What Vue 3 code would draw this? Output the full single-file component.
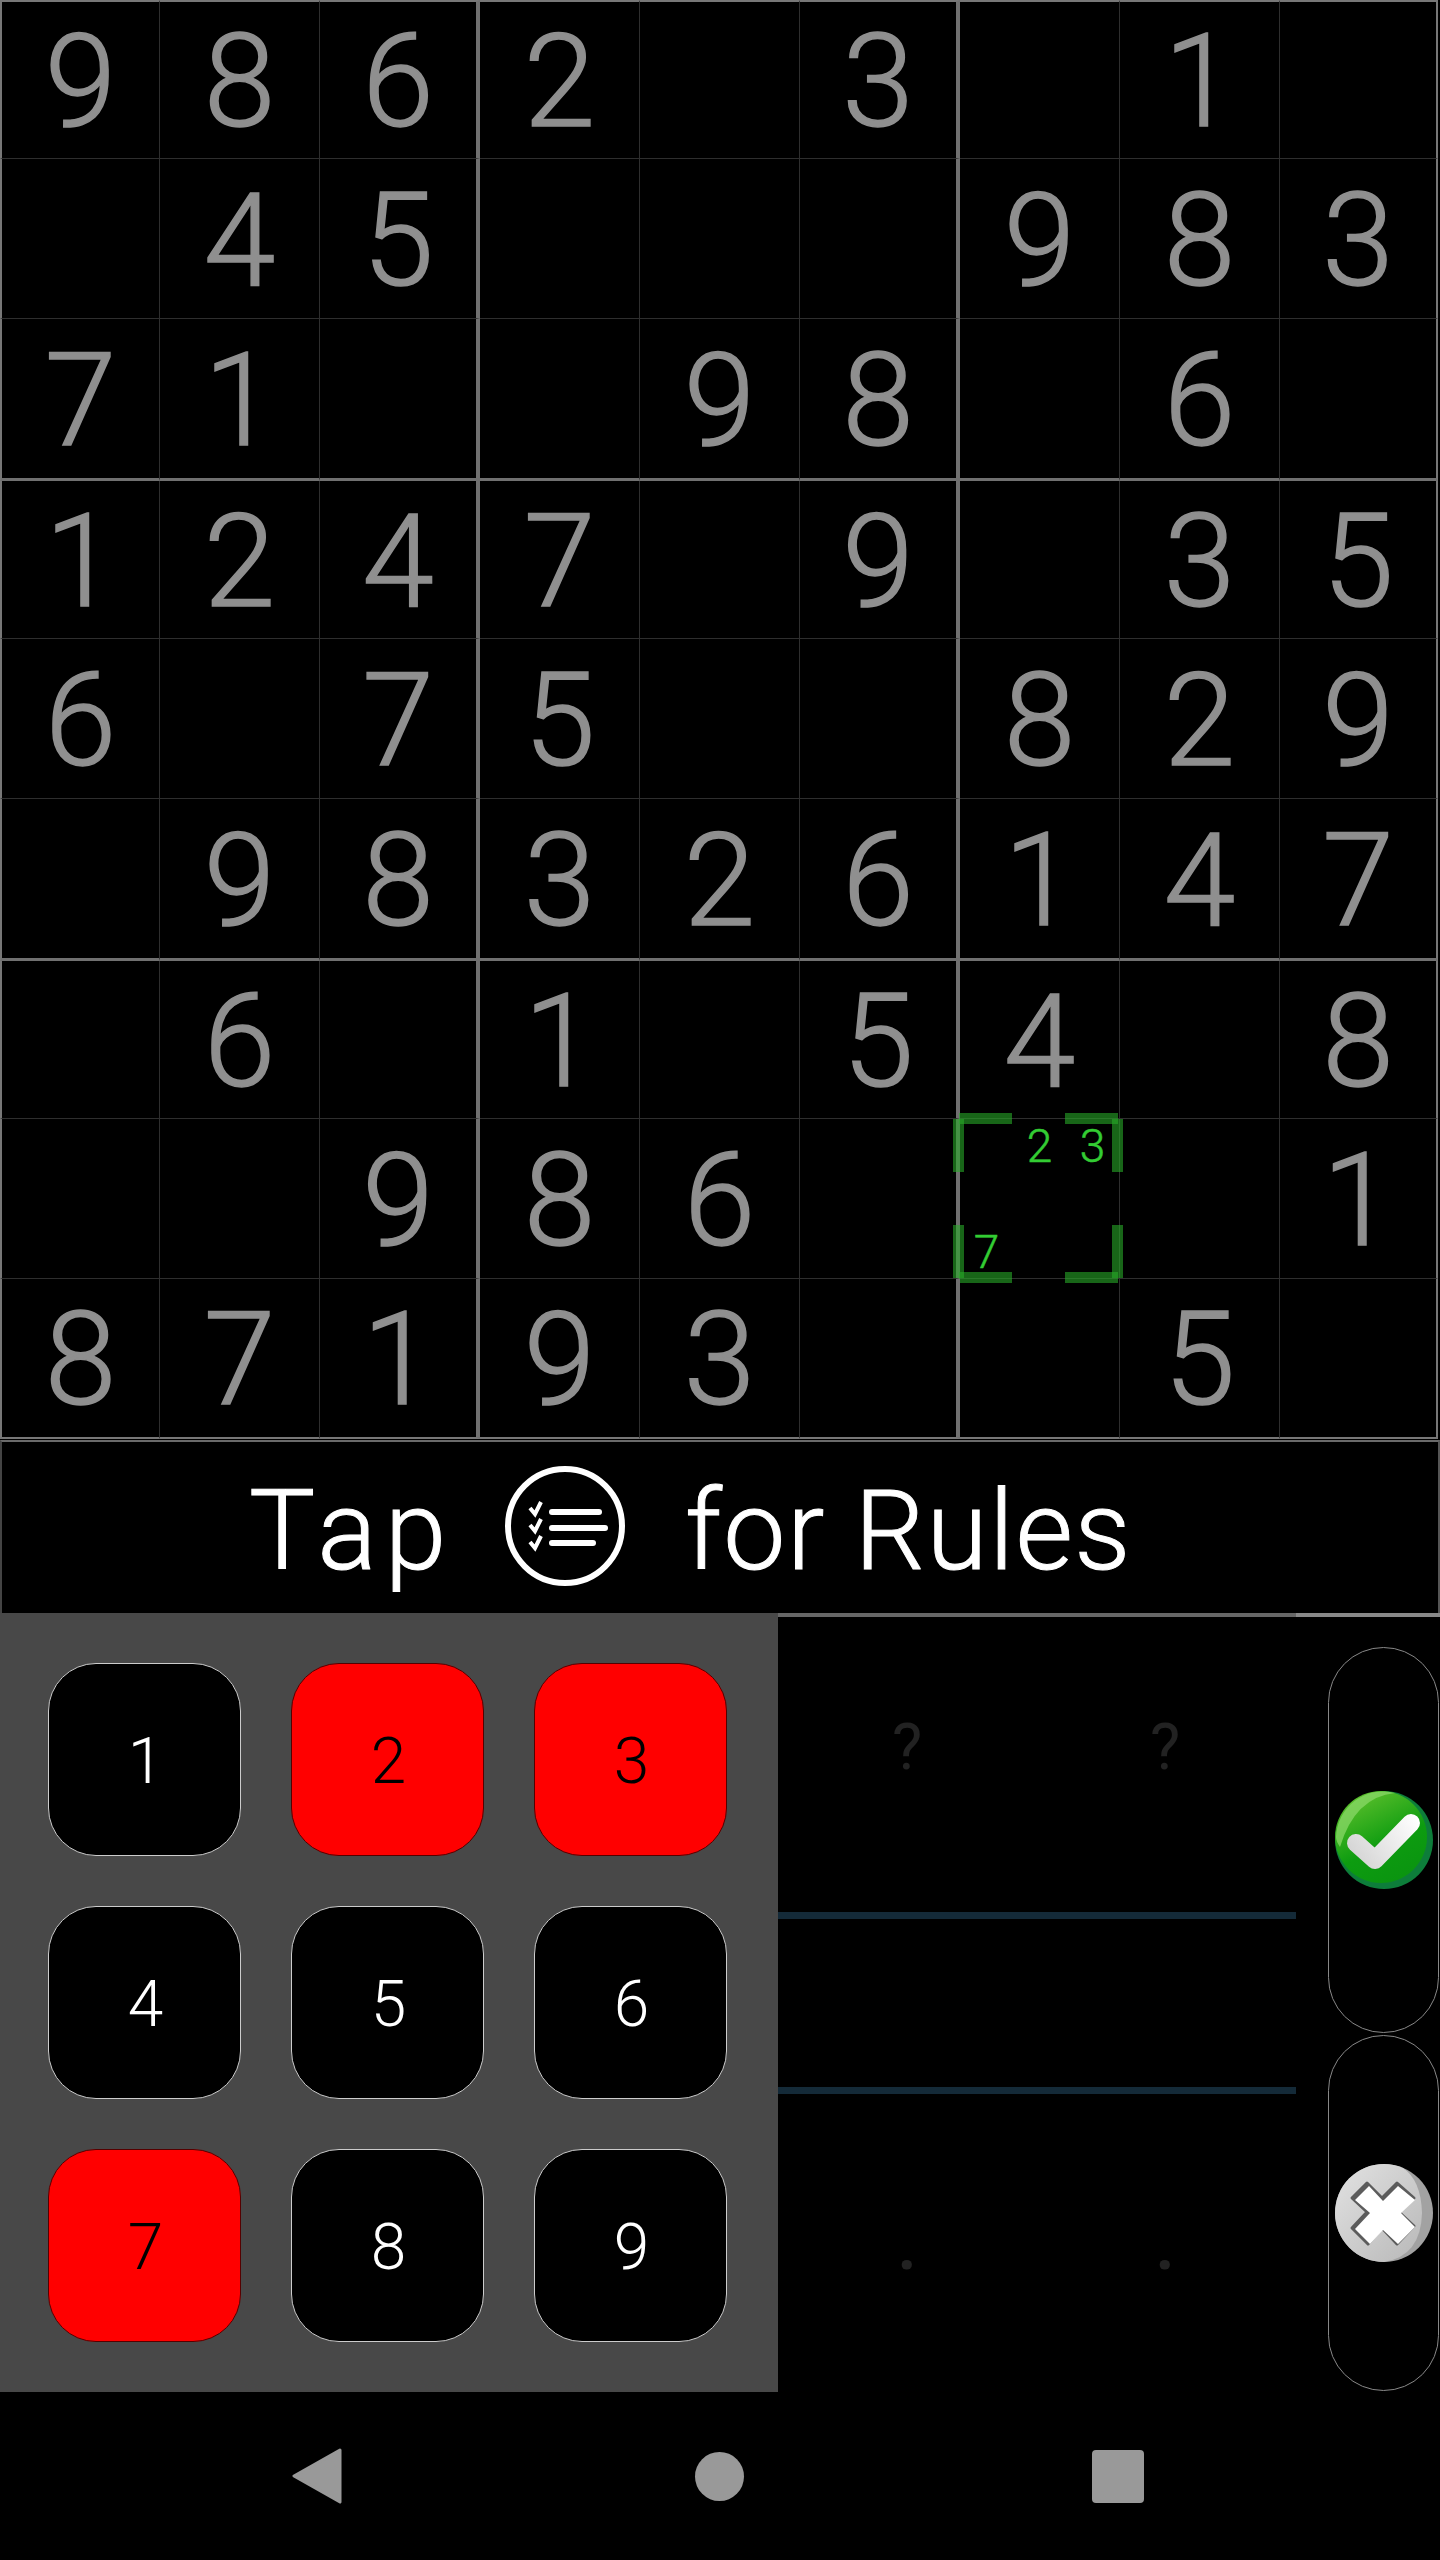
<template>
  <div class="screen">
    <div class="board">
      <div v-for="(cell, i) in cells" :key="i" class="cell" :class="cellClass(i)">
        <template v-if="i === selected">
          <div class="notes">
            <span v-for="n in 9" :key="n">{{ notes.includes(n) ? n : '' }}</span>
          </div>
          <i class="tick top-l-h"></i><i class="tick top-l-v"></i>
          <i class="tick top-r-h"></i><i class="tick top-r-v"></i>
          <i class="tick bot-l-h"></i><i class="tick bot-l-v"></i>
          <i class="tick bot-r-h"></i><i class="tick bot-r-v"></i>
        </template>
        <span v-else-if="cell !== '.'" class="digit">{{ cell }}</span>
      </div>
    </div>

    <div class="banner">
      <span class="tap">Tap</span>
      <svg class="rules" width="120" height="120" viewBox="0 0 120 120">
        <circle cx="60" cy="60" r="57" fill="none" stroke="#fff" stroke-width="6" />
        <g fill="none" stroke="#fff" stroke-width="4">
          <path d="M25 42l5 6 6-12" />
          <path d="M25 59l5 6 6-12" />
          <path d="M25 76l5 6 6-12" />
        </g>
        <g stroke="#fff" stroke-width="6" stroke-linecap="round">
          <path d="M47 46h47" />
          <path d="M47 62h53" />
          <path d="M47 77h41" />
        </g>
      </svg>
      <span class="for">for Rules</span>
    </div>

    <div class="lower">
      <div class="keypad">
        <button v-for="n in 9" :key="n" class="key" :class="{ bad: notes.includes(n) }">{{ n }}</button>
      </div>

      <div class="slots">
        <div class="slot-row first"><span>?</span><span>?</span></div>
        <div class="slot-row middle"></div>
        <div class="slot-row last"><span>.</span><span>.</span></div>
      </div>

      <div class="actions">
        <div class="pill ok">
          <svg width="98" height="98" viewBox="0 0 98 98">
            <defs>
              <linearGradient id="okFill" x1="0.2" y1="0" x2="0.7" y2="1">
                <stop offset="0" stop-color="#62c22e" />
                <stop offset="0.6" stop-color="#0d9c10" />
                <stop offset="1" stop-color="#0a9410" />
              </linearGradient>
              <linearGradient id="tickFill" gradientUnits="userSpaceOnUse" x1="20" y1="70" x2="80" y2="25">
                <stop offset="0" stop-color="#d4d4d4" />
                <stop offset="1" stop-color="#ffffff" />
              </linearGradient>
            </defs>
            <circle cx="49" cy="49" r="49" fill="#0d7d3a" />
            <circle cx="46" cy="46" r="46" fill="url(#okFill)" />
            <path d="M1 46A47 47 0 0 1 60 2Q20 6 5 56 1 50 1 46Z" fill="#8ad868" opacity="0.75" />
            <path d="M21 52L40 69 76 32" fill="none" stroke="url(#tickFill)" stroke-width="18" stroke-linecap="round" stroke-linejoin="round" />
          </svg>
        </div>
        <div class="pill cancel">
          <svg width="98" height="98" viewBox="0 0 98 98">
            <defs>
              <linearGradient id="noFill" x1="0" y1="0" x2="1" y2="1">
                <stop offset="0" stop-color="#e2e2e2" />
                <stop offset="1" stop-color="#b8b8b8" />
              </linearGradient>
            </defs>
            <circle cx="49" cy="49" r="49" fill="#a2a2a2" />
            <path d="M49 0A49 49 0 0 0 49 98Q86 92 87 49 86 16 68 4 59 0 49 0Z" fill="url(#noFill)" />
            <path d="M33 20L48 35 63 20 80 35 65 49 80 63 63 81 48 65 34 81 18 65 33 49 18 35Z" fill="#5c5c5c" stroke="#5c5c5c" stroke-width="3" stroke-linejoin="round" transform="translate(-1 -1)" />
            <path d="M34 22L48 37 63 22 80 36 66 49 80 63 63 80 48 66 35 80 20 65 35 49 20 36Z" fill="#fff" />
          </svg>
        </div>
      </div>
    </div>

    <div class="nav">
      <svg width="50" height="56" viewBox="0 0 50 56"><path d="M48 2L2 28l46 26z" fill="#999" stroke="#999" stroke-width="3" stroke-linejoin="round" /></svg>
      <div class="home"></div>
      <div class="recent"></div>
    </div>
  </div>
</template>

<script setup>
const rows = [
  '9862.3.1.',
  '.45...983',
  '71..98.6.',
  '1247.9.35',
  '6.75..829',
  '.98326147',
  '.6.1.54.8',
  '..986...1',
  '87193..5.',
]
const cells = rows.join('').split('')
const selected = 7 * 9 + 6
const notes = [2, 3, 7]

function cellClass(i) {
  const col = i % 9
  const row = Math.floor(i / 9)
  return {
    'col-first': col === 0,
    'col-end': col % 3 === 2 && col !== 8,
    'col-last': col === 8,
    'row-first': row === 0,
    'row-end': row % 3 === 2 && row !== 8,
    'row-last': row === 8,
  }
}
</script>

<style>
html, body {
  background: #000;
}
</style>

<style scoped>
.screen {
  width: 1440px;
  height: 2560px;
  background: #000;
  display: flex;
  flex-direction: column;
  font-family: Roboto, "Liberation Sans", sans-serif;
  overflow: hidden;
}
.board {
  display: grid;
  grid-template-columns: repeat(8, 160px) 158px;
  grid-template-rows: 159px 160px 162px 158px 160px 162px 158px 160px 160px;
  height: 1440px;
}
.cell {
  position: relative;
  box-sizing: border-box;
  border-right: 1px solid #2e2e2e;
  border-bottom: 1px solid #2e2e2e;
  display: flex;
  align-items: center;
  justify-content: center;
  color: #8f8f8f;
  font-size: 129px;
  font-weight: 300;
  line-height: 1;
}
.digit {
  padding-top: 3px;
  -webkit-text-stroke: 1.5px #8f8f8f;
}
.col-first { border-left: 2px solid #777; }
.col-end { border-right: 4px solid #707070; }
.col-last { border-right: 2px solid #777; }
.row-first { border-top: 2px solid #777; }
.row-end { border-bottom: 3px solid #707070; }
.row-last { border-bottom: 2px solid #777; }

.notes {
  width: 100%;
  height: 100%;
  display: grid;
  grid-template-columns: repeat(3, 1fr);
  grid-template-rows: repeat(3, 1fr);
  color: #33cc33;
  font-size: 46px;
  font-weight: 300;
  -webkit-text-stroke: 0.5px #33cc33;
}
.notes span {
  display: flex;
  align-items: center;
  justify-content: center;
}
.tick {
  position: absolute;
  background: rgba(40, 170, 40, 0.6);
}
.top-l-h, .top-r-h, .bot-l-h, .bot-r-h { width: 53px; height: 11px; }
.top-l-v, .top-r-v, .bot-l-v, .bot-r-v { width: 11px; height: 53px; }
.top-l-h { left: -1px; top: -6px; }
.top-r-h { right: 1px; top: -6px; }
.bot-l-h { left: -1px; bottom: -5px; }
.bot-r-h { right: 1px; bottom: -5px; }
.top-l-v { left: -7px; top: 0; }
.bot-l-v { left: -7px; bottom: 0; }
.top-r-v { right: -4px; top: 0; }
.bot-r-v { right: -4px; bottom: 0; }

.banner {
  height: 173px;
  box-sizing: border-box;
  border-top: 2px solid #6a6a6a;
  border-right: 2px solid #555;
  border-left: 2px solid #444;
  display: flex;
  align-items: center;
  color: #fff;
  font-size: 111px;
  font-weight: 300;
  line-height: 1;
  padding-left: 247px;
  -webkit-text-stroke: 1px #fff;
}
.tap {
  width: 256px;
  padding-top: 8px;
  letter-spacing: 8px;
}
.rules { margin-top: -4px; }
.for {
  margin-left: 60px;
  padding-top: 8px;
  letter-spacing: 1.5px;
}

.lower {
  height: 779px;
  display: flex;
}
.keypad {
  width: 778px;
  box-sizing: border-box;
  background: #484848;
  padding: 50px 50px 50px 48px;
  display: grid;
  grid-template-columns: repeat(3, 193px);
  grid-template-rows: repeat(3, 193px);
  column-gap: 50px;
  row-gap: 50px;
}
.key {
  box-sizing: border-box;
  padding: 3px 0 0 2px;
  background: #000;
  color: #fff;
  border: 1px solid #ccc;
  border-radius: 48px;
  font-family: inherit;
  font-size: 64px;
  font-weight: 300;
}
.key.bad {
  background: #f00;
  color: #000;
  border-color: #500;
}

.slots {
  width: 518px;
  border-top: 4px solid #666;
  display: flex;
  flex-direction: column;
}
.slot-row {
  display: flex;
  color: #222;
  font-size: 64px;
}
.slot-row span {
  width: 258px;
  text-align: center;
}
.first {
  height: 295px;
  border-bottom: 7px solid #142a38;
}
.first span {
  margin-top: 99px;
  line-height: 1;
}
.middle {
  height: 168px;
  border-bottom: 7px solid #142a38;
}
.last span {
  margin-top: 122px;
  line-height: 1;
  font-weight: 700;
}

.actions {
  flex: 1;
  border-top: 4px solid #888;
  padding: 30px 1px 0 32px;
  display: flex;
  flex-direction: column;
  gap: 2px;
}
.pill {
  box-sizing: border-box;
  border: 1px solid #888;
  border-radius: 56px;
  display: flex;
  align-items: center;
  justify-content: center;
}
.ok { height: 386px; }
.cancel { height: 356px; }

.nav {
  flex: 1;
  display: flex;
  align-items: center;
  padding-left: 292px;
}
.home {
  width: 49px;
  height: 49px;
  border-radius: 50%;
  background: #999;
  margin-left: 353px;
}
.recent {
  width: 52px;
  height: 53px;
  border-radius: 4px;
  background: #999;
  margin-left: 348px;
}
</style>
